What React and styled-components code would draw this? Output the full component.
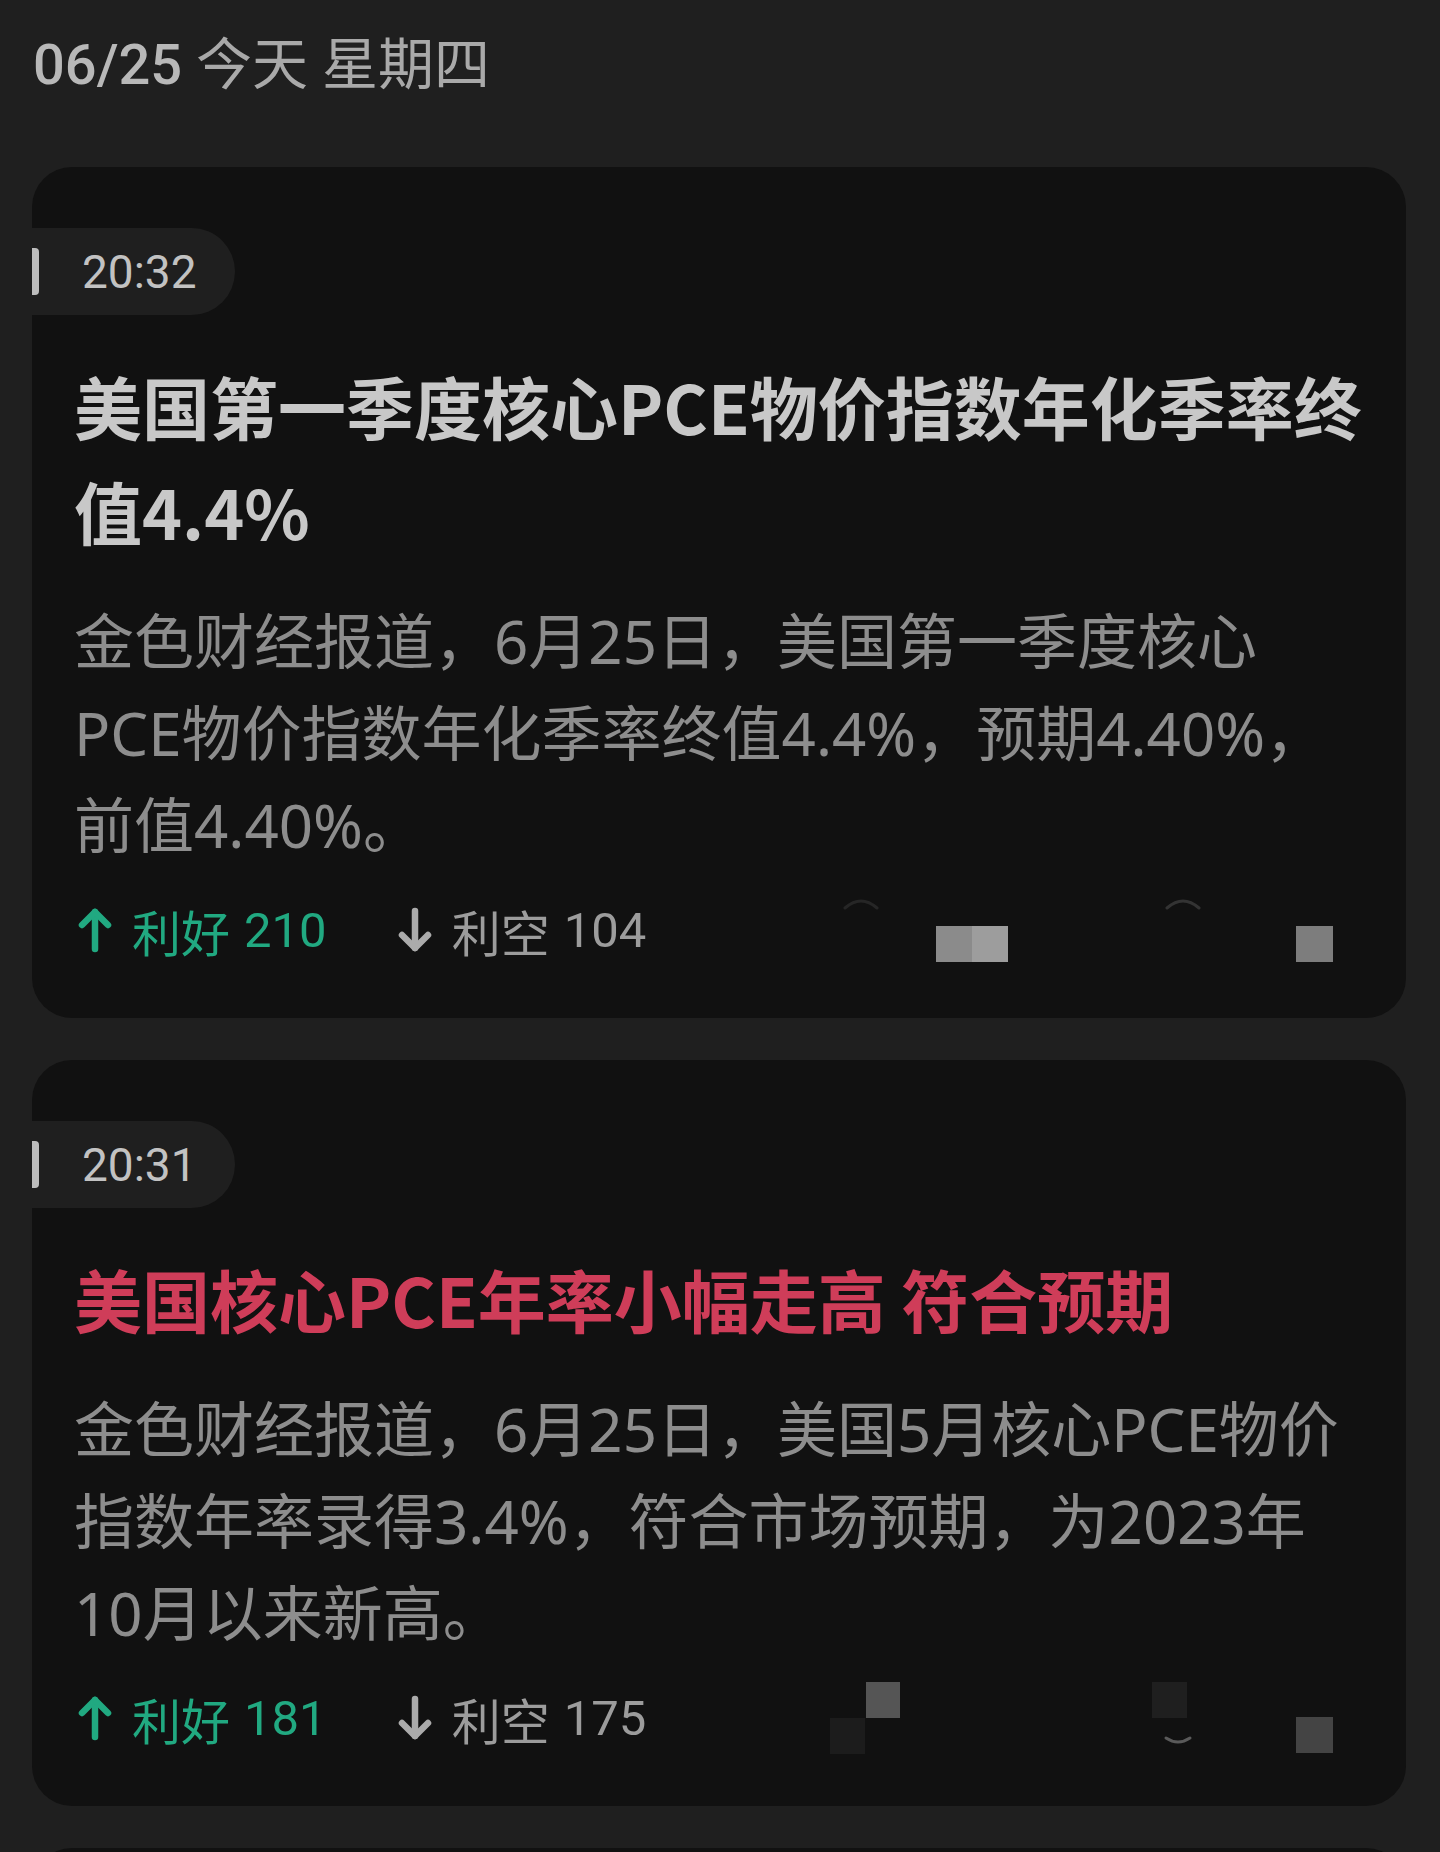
import React from 'react';
import styled, { createGlobalStyle } from 'styled-components';

const GlobalStyle = createGlobalStyle`
  body {
    margin: 0;
    background: #1f1f1f;
    font-family: Roboto, "Noto Sans CJK SC", sans-serif;
  }
`;

const Page = styled.div`
  padding: 25px 34px 0 32px;
  min-height: 1852px;
  box-sizing: border-box;
`;

const DateLine = styled.div`
  font-family: Roboto, "Noto Sans CJK SC", sans-serif;
  font-size: 56px;
  line-height: 80px;
  color: #a9a9a9;
  padding-left: 1px;
`;

const DateNum = styled.span`
  font-weight: 500;
  color: #b8b8b8;
`;

const Feed = styled.div`
  display: flex;
  flex-direction: column;
  gap: 42px;
  margin-top: 62px;
`;

const Card = styled.div`
  display: flex;
  flex-direction: column;
  background: #111111;
  border-radius: 40px;
  padding: 61px 0 58px 0;
  min-height: ${p => p.$minHeight || 0}px;
`;

const TimePill = styled.div`
  display: flex;
  align-items: center;
  align-self: flex-start;
  gap: 43px;
  height: 87px;
  padding-right: 38px;
  background: #1f1f1f;
  border-radius: 0 44px 44px 0;
`;

const Marker = styled.span`
  width: 7px;
  height: 47px;
  background: #bdbdbd;
  border-radius: 0 4px 4px 0;
`;

const TimeText = styled.span`
  font-family: Roboto, sans-serif;
  font-size: 46px;
  color: #c2c2c2;
`;

const Content = styled.div`
  padding: 0 34px 0 42px;
`;

const Title = styled.h2`
  margin: 38px 0 0;
  font-family: "Noto Sans CJK SC", sans-serif;
  font-weight: 700;
  font-size: 68px;
  line-height: 105px;
  color: ${p => (p.$hot ? '#cf3d59' : '#c8c8c8')};
`;

const Body = styled.p`
  margin: 32px 0 0;
  padding-right: 11px;
  font-family: "Noto Sans", "Noto Sans CJK SC", sans-serif;
  font-size: 60px;
  line-height: 92px;
  color: #8d8d8d;
`;

const Footer = styled.div`
  position: relative;
  display: flex;
  align-items: center;
  gap: 67px;
  height: 60px;
  margin-top: 29px;
`;

const Vote = styled.div`
  display: flex;
  align-items: center;
  font-family: Roboto, "Noto Sans CJK SC", sans-serif;
  font-size: 49px;
  color: ${p => (p.$up ? '#21a981' : '#9c9c9c')};

  svg {
    margin-right: 20px;
    margin-left: 4px;
  }
`;

const Count = styled.span`
  margin-left: 14px;
`;

// pixelated share / comment icons left over from the censoring in the screenshot
const Mosaic = styled.span`
  position: absolute;
  left: ${p => p.$x}px;
  top: ${p => p.$y}px;
  width: ${p => p.$w}px;
  height: 36px;
  background: ${p => p.$c};
`;

const Arc = styled.svg`
  position: absolute;
  left: ${p => p.$x}px;
  top: ${p => p.$y}px;
`;

const Arrow = ({ down, color }) => (
  <svg width="34" height="46" viewBox="0 0 34 46">
    <g
      fill="none"
      stroke={color}
      strokeWidth="6.5"
      strokeLinecap="round"
      strokeLinejoin="round"
      transform={down ? 'rotate(180 17 23)' : undefined}
    >
      <path d="M17 42V5" />
      <path d="M4 18L17 5L30 18" />
    </g>
  </svg>
);

const news = [
  {
    time: '20:32',
    title: '美国第一季度核心PCE物价指数年化季率终值4.4%',
    body: '金色财经报道，6月25日，美国第一季度核心PCE物价指数年化季率终值4.4%，预期4.40%，前值4.40%。',
    up: 210,
    down: 104,
    mosaics: [
      { x: 862, y: 26, w: 36, c: '#8b8b8b' },
      { x: 898, y: 26, w: 36, c: '#9d9d9d' },
      { x: 1222, y: 26, w: 37, c: '#7d7d7d' },
    ],
    arcs: [
      { x: 767, y: -2, d: 'M4 10Q20 -4 36 10', c: '#262626' },
      { x: 1089, y: -2, d: 'M4 10Q20 -4 36 10', c: '#333333' },
    ],
  },
  {
    time: '20:31',
    title: '美国核心PCE年率小幅走高 符合预期',
    hot: true,
    body: '金色财经报道，6月25日，美国5月核心PCE物价指数年率录得3.4%，符合市场预期，为2023年10月以来新高。',
    up: 181,
    down: 175,
    mosaics: [
      { x: 792, y: -6, w: 34, c: '#555555' },
      { x: 756, y: 30, w: 35, c: '#1c1c1c' },
      { x: 1078, y: -6, w: 35, c: '#1f1f1f' },
      { x: 1222, y: 29, w: 37, c: '#444444' },
    ],
    arcs: [{ x: 1084, y: 48, d: 'M8 2Q20 10 32 2', c: '#5a5a5a' }],
  },
];

function NewsCard({ item }) {
  return (
    <Card>
      <TimePill>
        <Marker />
        <TimeText>{item.time}</TimeText>
      </TimePill>
      <Content>
        <Title $hot={item.hot}>{item.title}</Title>
        <Body>{item.body}</Body>
        <Footer>
          <Vote $up>
            <Arrow color="#21a981" />
            利好<Count>{item.up}</Count>
          </Vote>
          <Vote>
            <Arrow down color="#ababab" />
            利空<Count>{item.down}</Count>
          </Vote>
          {item.mosaics.map((m, i) => (
            <Mosaic key={i} $x={m.x} $y={m.y} $w={m.w} $c={m.c} />
          ))}
          {item.arcs.map((a, i) => (
            <Arc key={i} $x={a.x} $y={a.y} width="40" height="12" viewBox="0 0 40 12">
              <path d={a.d} fill="none" stroke={a.c} strokeWidth="3" strokeLinecap="round" />
            </Arc>
          ))}
        </Footer>
      </Content>
    </Card>
  );
}

export default function App() {
  return (
    <Page>
      <GlobalStyle />
      <DateLine>
        <DateNum>06/25</DateNum> 今天 星期四
      </DateLine>
      <Feed>
        {news.map(item => (
          <NewsCard key={item.time} item={item} />
        ))}
        <Card $minHeight={200} />
      </Feed>
    </Page>
  );
}
